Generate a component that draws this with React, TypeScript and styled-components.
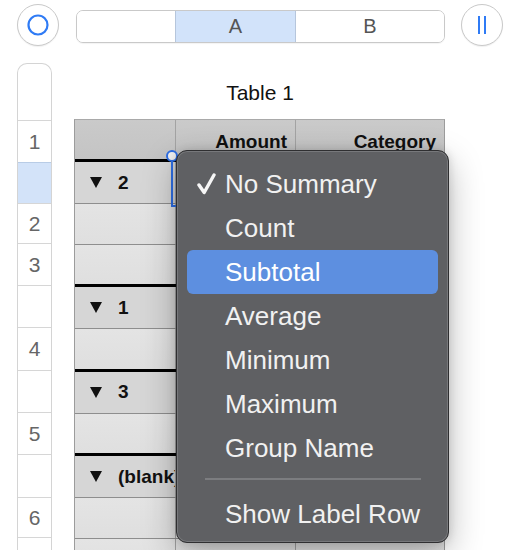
import styled, { createGlobalStyle } from "styled-components";

const GlobalStyle = createGlobalStyle`
  html, body {
    margin: 0;
    background: #ffffff;
    font-family: "Liberation Sans", Arial, sans-serif;
  }
`;

const Page = styled.div`
  position: relative;
  width: 520px;
  height: 550px;
  overflow: hidden;
  background: #fff;
`;

const TopBar = styled.div`
  display: flex;
  align-items: center;
  gap: 16px;
  padding: 4px 17px 0 17px;
  height: 42px;
`;

const RoundButton = styled.div`
  width: 42px;
  height: 42px;
  box-sizing: border-box;
  border-radius: 50%;
  border: 1px solid #c9c9c9;
  background: #fff;
  box-shadow: 0 1px 1px rgba(0, 0, 0, 0.06);
  display: flex;
  align-items: center;
  justify-content: center;
  flex: none;
`;

const Segmented = styled.div`
  display: grid;
  grid-template-columns: 99px 120px 1fr;
  width: 369px;
  height: 33px;
  margin: 3px 0 0 1px;
  box-sizing: border-box;
  border: 1px solid #c9c9c9;
  border-radius: 7px;
  overflow: hidden;
  box-shadow: 0 1px 1px rgba(0, 0, 0, 0.05);
`;

const Segment = styled.div<{ $active?: boolean; $last?: boolean }>`
  display: flex;
  align-items: center;
  justify-content: center;
  font-size: 20px;
  color: #555;
  background: ${(p) => (p.$active ? "#d2e3fa" : "#fff")};
  border-right: ${(p) => (p.$last ? "none" : "1px solid #b6c6dc")};
`;

const Body = styled.div`
  display: flex;
  gap: 23px;
  padding-left: 17px;
  margin-top: 17px;
`;

const RowHeaders = styled.div`
  width: 35px;
  box-sizing: border-box;
  border: 1px solid #d4d4d4;
  border-bottom: none;
  border-radius: 10px 10px 0 0;
  display: flex;
  flex-direction: column;
  flex: none;
`;

const RowHeaderCell = styled.div<{ $h: number; $selected?: boolean; $first?: boolean }>`
  height: ${(p) => p.$h}px;
  box-sizing: border-box;
  display: flex;
  align-items: center;
  justify-content: center;
  font-size: 21px;
  color: #666;
  background: ${(p) => (p.$selected ? "#d3e3f9" : "transparent")};
  border-top: ${(p) =>
    p.$first ? "none" : p.$selected ? "1px solid #b8cce6" : "1px solid #d6d6d6"};
  border-bottom: ${(p) => (p.$selected ? "1px solid #b8cce6" : "none")};
  margin-bottom: ${(p) => (p.$selected ? "-1px" : "0")};
`;

const TableArea = styled.div`
  width: 370px;
  display: flex;
  flex-direction: column;
`;

const Title = styled.div`
  height: 56px;
  padding-top: 4px;
  box-sizing: border-box;
  display: flex;
  align-items: center;
  justify-content: center;
  font-size: 21px;
  color: #111;
`;

const Grid = styled.div`
  border-left: 1px solid #9c9c9c;
  border-right: 1px solid #9c9c9c;
  border-top: 1px solid #a9a9a9;
  margin-left: -1px;
`;

const Row = styled.div<{ $kind: "header" | "group" | "data"; $h: number }>`
  display: grid;
  grid-template-columns: 100px 120px 1fr;
  height: ${(p) => p.$h}px;
  box-sizing: border-box;
  background: ${(p) =>
    p.$kind === "header"
      ? "linear-gradient(#cacaca, #c4c4c4)"
      : p.$kind === "group"
      ? "#d6d6d6"
      : "linear-gradient(#e4e4e4, #dfdfdf)"};
  border-top: ${(p) =>
    p.$kind === "group" ? "3px solid #000" : p.$kind === "data" ? "1px solid #8e8e8e" : "none"};
`;

const Cell = styled.div<{ $align?: "left" | "right" }>`
  display: flex;
  align-items: center;
  justify-content: ${(p) => (p.$align === "right" ? "flex-end" : "flex-start")};
  border-left: 1px solid #a3a3a3;
  overflow: hidden;
  white-space: nowrap;
  &:first-child {
    border-left: none;
  }
`;

const HeadText = styled.span`
  font-weight: bold;
  font-size: 19px;
  color: #111;
  padding: 4px 8px 0 0;
`;

const GroupLabel = styled.div`
  display: flex;
  align-items: center;
  gap: 16px;
  padding-left: 15px;
  font-weight: bold;
  font-size: 19px;
  color: #111;
`;

const Selection = styled.div`
  position: absolute;
  left: 171px;
  top: 157px;
  width: 128px;
  height: 50px;
  box-sizing: border-box;
  border: 2px solid #2f6fe6;
`;

const Handle = styled.div`
  position: absolute;
  left: 166px;
  top: 150px;
  width: 12px;
  height: 12px;
  box-sizing: border-box;
  border-radius: 50%;
  background: #f4f4f4;
  border: 2px solid #2f6fe6;
`;

const Menu = styled.div`
  position: absolute;
  left: 176px;
  top: 150px;
  width: 273px;
  height: 393px;
  box-sizing: border-box;
  padding: 11px 10px 8px 10px;
  background: #5f6063;
  border: 1px solid #2f2f31;
  border-radius: 11px;
  box-shadow: inset 0 0 0 1px #77787b, 0 12px 34px rgba(0, 0, 0, 0.28), 0 0 10px rgba(0, 0, 0, 0.14);
  display: flex;
  flex-direction: column;
`;

const MenuItem = styled.div<{ $highlight?: boolean }>`
  height: 44px;
  flex: none;
  display: flex;
  align-items: center;
  padding-left: 10px;
  border-radius: 6px;
  font-size: 26px;
  color: ${(p) => (p.$highlight ? "#ffffff" : "#f1f1f1")};
  background: ${(p) => (p.$highlight ? "#5d8fe0" : "transparent")};
`;

const CheckSlot = styled.span`
  width: 28px;
  display: flex;
  align-items: center;
`;

const Separator = styled.div`
  height: 2px;
  flex: none;
  margin: 8px 17px 12px 18px;
  background: #7c7d80;
`;

const Triangle = () => (
  <svg width="12" height="11" viewBox="0 0 12 11">
    <path d="M0 0 H12 L6 11 Z" fill="#111" />
  </svg>
);

const Check = () => (
  <svg width="19" height="22" viewBox="0 0 19 22">
    <path
      d="M2 12 L7.2 19.5 L17 2"
      fill="none"
      stroke="#f6f6f6"
      strokeWidth="3.4"
      strokeLinecap="round"
      strokeLinejoin="round"
    />
  </svg>
);

const rowHeaders = [
  { h: 56, label: "" },
  { h: 42, label: "1" },
  { h: 42, label: "", selected: true },
  { h: 40, label: "2" },
  { h: 42, label: "3" },
  { h: 42, label: "" },
  { h: 43, label: "4" },
  { h: 42, label: "" },
  { h: 42, label: "5" },
  { h: 43, label: "" },
  { h: 40, label: "6" },
  { h: 42, label: "" },
];

type TableRow = { kind: "group" | "data"; label?: string; h: number };

const tableRows: TableRow[] = [
  { kind: "group", label: "2", h: 44 },
  { kind: "data", h: 40.5 },
  { kind: "data", h: 40.5 },
  { kind: "group", label: "1", h: 44 },
  { kind: "data", h: 40.5 },
  { kind: "group", label: "3", h: 44 },
  { kind: "data", h: 40.5 },
  { kind: "group", label: "(blank)", h: 44 },
  { kind: "data", h: 40.5 },
  { kind: "data", h: 40.5 },
];

const menuItems = ["No Summary", "Count", "Subtotal", "Average", "Minimum", "Maximum", "Group Name"];

export default function App() {
  return (
    <Page>
      <GlobalStyle />
      <TopBar>
        <RoundButton>
          <svg width="22" height="22" viewBox="0 0 22 22">
            <circle cx="11" cy="11" r="9.5" fill="none" stroke="#2f7bf5" strokeWidth="2.2" />
          </svg>
        </RoundButton>
        <Segmented>
          <Segment />
          <Segment $active>A</Segment>
          <Segment $last>B</Segment>
        </Segmented>
        <RoundButton>
          <svg width="14" height="20" viewBox="0 0 14 20">
            <rect x="3" y="1" width="2" height="18" fill="#2f7bf5" />
            <rect x="9" y="1" width="2" height="18" fill="#2f7bf5" />
          </svg>
        </RoundButton>
      </TopBar>

      <Body>
        <RowHeaders>
          {rowHeaders.map((r, i) => (
            <RowHeaderCell key={i} $h={r.h} $first={i === 0} $selected={r.selected}>
              {r.label}
            </RowHeaderCell>
          ))}
        </RowHeaders>

        <TableArea>
          <Title>Table 1</Title>
          <Grid>
            <Row $kind="header" $h={39}>
              <Cell />
              <Cell $align="right">
                <HeadText>Amount</HeadText>
              </Cell>
              <Cell $align="right">
                <HeadText>Category</HeadText>
              </Cell>
            </Row>
            {tableRows.map((r, i) => (
              <Row key={i} $kind={r.kind} $h={r.h}>
                <Cell>
                  {r.kind === "group" && (
                    <GroupLabel>
                      <Triangle />
                      {r.label}
                    </GroupLabel>
                  )}
                </Cell>
                <Cell />
                <Cell />
              </Row>
            ))}
          </Grid>
        </TableArea>
      </Body>

      <Selection />
      <Handle />

      <Menu>
        {menuItems.map((item, i) => (
          <MenuItem key={item} $highlight={item === "Subtotal"}>
            <CheckSlot>{i === 0 && <Check />}</CheckSlot>
            {item}
          </MenuItem>
        ))}
        <Separator />
        <MenuItem>
          <CheckSlot />
          Show Label Row
        </MenuItem>
      </Menu>
    </Page>
  );
}
